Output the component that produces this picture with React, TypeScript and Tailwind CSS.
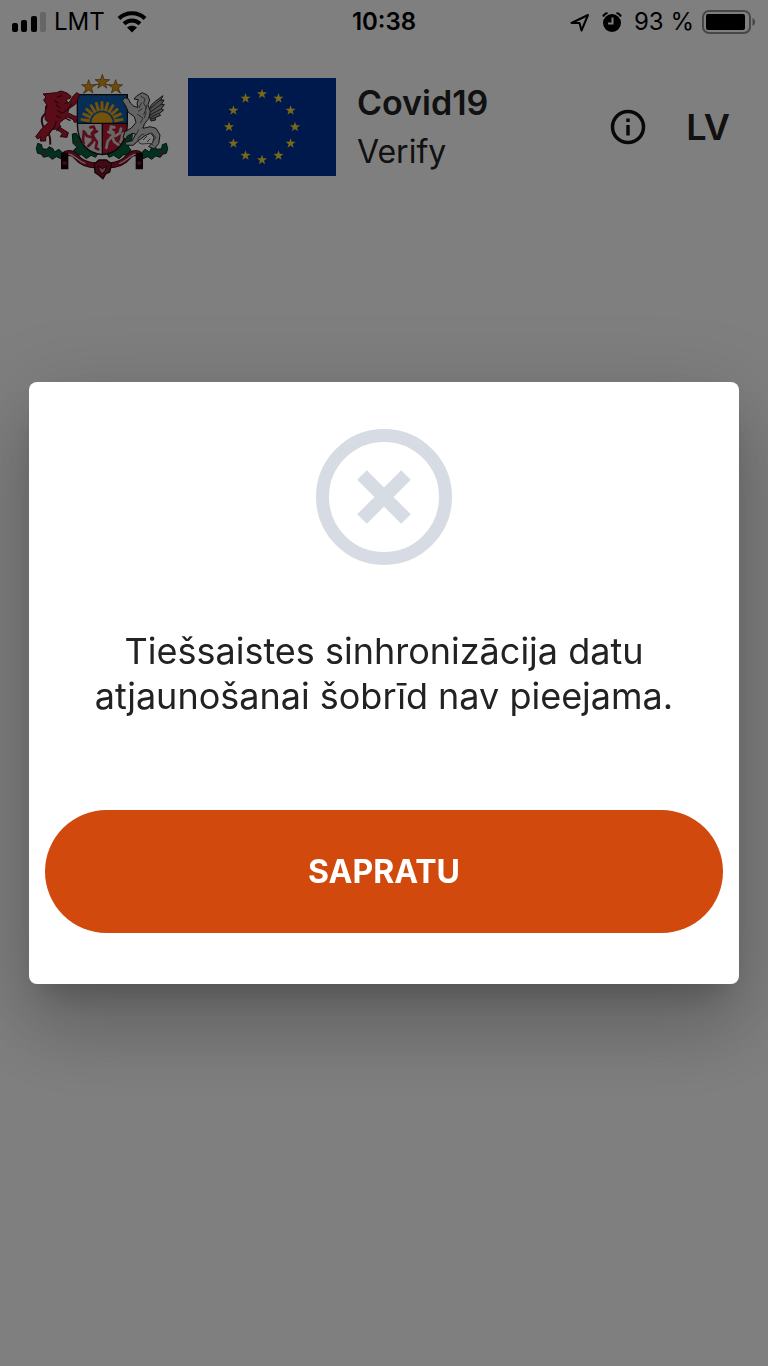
import { useState } from 'react';

function starPoints(cx: number, cy: number, r: number) {
  return Array.from({ length: 10 }, (_, i) => {
    const radius = i % 2 === 0 ? r : r * 0.4;
    const angle = (Math.PI / 5) * i - Math.PI / 2;
    return `${(cx + radius * Math.cos(angle)).toFixed(2)},${(cy + radius * Math.sin(angle)).toFixed(2)}`;
  }).join(' ');
}

function SignalIcon() {
  return (
    <svg className="h-5 w-[34px]" viewBox="0 0 34 20" aria-hidden="true">
      <rect x="0" y="11" width="6" height="9" rx="2" />
      <rect x="9" y="8" width="6" height="12" rx="2" />
      <rect x="19" y="4" width="6" height="16" rx="2" />
      <rect x="28" y="0" width="6" height="20" rx="2" opacity="0.2" />
    </svg>
  );
}

function WifiIcon() {
  return (
    <svg className="h-[22px] w-[30px]" viewBox="0 0 30 22" aria-hidden="true">
      <g fill="none" stroke="#000" strokeWidth="4">
        <path d="M2 7.500C9 .6 21 .6 28 7.500" />
        <path d="M7 12.700c4.500-4.400 11.500-4.400 16 0" />
      </g>
      <path d="M10 16.600c2.800-2.600 7.200-2.600 10 0l-5 5z" />
    </svg>
  );
}

function LocationIcon() {
  return (
    <svg className="h-5 w-5" viewBox="0 0 20 20" aria-hidden="true">
      <path
        d="M1.500 11L18 3l-6.500 15.500-2-7.500z"
        fill="none"
        stroke="#000"
        strokeWidth="2"
        strokeLinejoin="round"
      />
    </svg>
  );
}

function AlarmIcon() {
  return (
    <svg className="h-5 w-5" viewBox="0 0 20 20" aria-hidden="true">
      <circle cx="10" cy="11" r="9" />
      <path d="M1 4.500C2 2.500 3.500 1.300 5.500 1M19 4.500c-1-2-2.500-3.200-4.500-3.500" fill="none" stroke="#000" strokeWidth="2" />
      <path d="M10.500 5.500v6H6" fill="none" stroke="#fff" strokeWidth="2" />
    </svg>
  );
}

function BatteryIcon() {
  return (
    <svg className="h-6 w-[54px]" viewBox="0 0 54 24" aria-hidden="true">
      <rect x="1" y="1" width="47" height="22" rx="6" fill="none" stroke="#000" strokeOpacity="0.45" strokeWidth="2" />
      <rect x="4" y="4" width="39" height="16" rx="2" />
      <path d="M50.500 8c3.500 1.500 3.500 6.500 0 8z" opacity="0.45" />
    </svg>
  );
}

function StatusBar() {
  return (
    <div className="flex h-[43px] items-center px-3 text-2xl text-black">
      <div className="flex flex-1 items-center gap-2">
        <SignalIcon />
        <span>LMT</span>
        <span className="pl-1">
          <WifiIcon />
        </span>
      </div>
      <span className="font-semibold">10:38</span>
      <div className="flex flex-1 items-center justify-end gap-2">
        <LocationIcon />
        <span className="pl-1">
          <AlarmIcon />
        </span>
        <span className="pl-1 whitespace-nowrap">93 %</span>
        <BatteryIcon />
      </div>
    </div>
  );
}

const SUN_RAYS = [-80, -64, -48, -32, -16, 0, 16, 32, 48, 64, 80];

function CoatOfArms() {
  return (
    <svg className="h-[107px] w-[134px] shrink-0" viewBox="30 25 402 321" role="img" aria-label="Latvija">
      {/* oak branches */}
      <g fill="#06603f" stroke="#02291c" strokeWidth="3">
        <path d="M38 236l12 4 2 12 14 2 6-8 12 6 4 10 14-8 10 10 16-4 4 12-10 8-14 2-14-6-12 8-12-10-14 4-8-10-10-2-4-14z" />
        <path d="M424 236l-12 4-2 12-14 2-6-8-12 6-4 10-14-8-10 10-16-4-4 12 10 8 14 2 14-6 12 8 12-10 14 4 8-10 10-2 4-14z" />
        <path d="M142 208l12-2 8 14 10 12 14 16 22 4 12 12-8 14-14-6-14 10-14-12-16 2-8-16 10-8-12-12z" />
        <path d="M322 204l-12 4-8 12-8 14-18 14-20 4-12 12 8 14 14-6 16 10 14-12 14 2 8-16-8-10 10-14z" />
      </g>
      <g fill="#8b2032">
        <circle cx="56" cy="266" r="5" />
        <circle cx="408" cy="266" r="5" />
        <circle cx="160" cy="236" r="4" />
        <circle cx="304" cy="236" r="4" />
      </g>
      {/* ribbon */}
      <g fill="none" strokeLinecap="round">
        <path d="M124 266c22-4 26 8 42 22 18 14 38 14 66 14s48 0 66-14c16-14 20-26 42-22" stroke="#42050f" strokeWidth="18" />
        <path d="M124 266c22-4 26 8 42 22 18 14 38 14 66 14s48 0 66-14c16-14 20-26 42-22" stroke="#98152b" strokeWidth="12" />
        <path d="M130 268c18 2 26 20 50 28M334 268c-18 2-26 20-50 28" stroke="#d9c3c8" strokeWidth="4" />
      </g>
      <path d="M108 264h22v50h-22zM332 264h22v50h-22z" fill="#160306" />
      <path d="M113 290h12v10h-12zM337 290h12v10h-12z" fill="#7a1a2b" />
      <path d="M208 298l14-12h22l16 12-6 24-12 6-8 14-14-12-10-6z" fill="#86152a" stroke="#2e030a" strokeWidth="4" />
      <path d="M218 304l14 8 14-8-6 14-8 10-8-10z" fill="#b98290" stroke="#2e030a" strokeWidth="3" />
      {/* shield */}
      <path d="M157 90h150v86H157z" fill="#0f5cab" />
      <path d="M157 176h75v94c-45-4-75-36-75-94z" fill="#dcdcdc" />
      <path d="M232 176h75c0 58-30 90-75 94z" fill="#b81a32" />
      <g fill="#e6a417">
        <path d="M199 175a32 32 0 0 1 64 0z" />
        {SUN_RAYS.map((angle) => (
          <path key={angle} d="M226 138l1-28h8l1 28z" transform={`rotate(${angle} 231 175)`} />
        ))}
      </g>
      <path d="M157 90h150v86c0 58-30 90-75 94-45-4-75-36-75-94zM157 176h150M232 176v94" fill="none" stroke="#111" strokeWidth="4" />
      <g fill="none" strokeWidth="8" strokeLinecap="round" strokeLinejoin="round">
        <path d="M196 188l10-2 4 10-8 8 4 14-4 14-12 12M206 218l10 14-4 18 8 4M200 208l16-8M202 218l-16-4-6-10M176 236c-6-14 2-22 0-36" stroke="#b01e36" />
        <path d="M268 188l-10-2-2 10 10 8-4 14 6 14 12 8M260 216l-12 14-4 20M264 208l-14-6M270 214l14-8 4-14M286 232c8-10 2-18 8-26" stroke="#cfcfcf" />
      </g>
      {/* lion */}
      <path
        d="M76 240c-2-14 4-24-10-39-18-21-22-42-4-54"
        fill="none"
        stroke="#55101b"
        strokeWidth="6"
      />
      <path d="M62 124l8-4 10 8 5 14-8 8-8-3-8-10z" fill="#a61a2e" stroke="#4a0a15" strokeWidth="3" />
      <path
        d="M94 84l14-5 18 6 12 10-3 6-11 3 3 9-8 4 14-4 10-17 12-12 10 6-5 10-8 18-20 14-4 12 18 9 12 4-3 15-7 1-3-8-18-8-12 8-12 10 3 14 24 15-4 14-20-2 6-10-18-13-14 2-8 14-10 8 0 12-16 0 2-12-10 6-6-7 18-24 20-18-9-9-1-24 7-18-11-17 7-9-9-9z"
        fill="#b51a30"
        stroke="#4a0a15"
        strokeWidth="3"
      />
      <path
        d="M96 98l14-6M88 108l12 8M92 120l14 10M96 136l16 10M92 152l16 8M94 168l-4 16-18 22M108 184l-14 14M112 146l16-12 14-18M120 160l16 8"
        fill="none"
        stroke="#5c0b19"
        strokeWidth="4"
      />
      {/* griffin */}
      <path
        d="M414 93l-7 14 10-1-8 14 9 0-10 13 8 3-14 11 5 5-17 7 2 7-14 3-8-26 8-21 14-13z"
        fill="#a0a0a0"
        stroke="#222"
        strokeWidth="3"
      />
      <path d="M408 104l-32 28M410 118l-34 24M406 134l-32 18M400 146l-26 14M390 160l-14 4" stroke="#333" strokeWidth="3" />
      <path
        d="M336 93l16-9 16 8 6 14-5 14 7 21-5 21-14 17-2 12 20-5 18 5 12 20-4 26-14 15-16-6 12-12 4-16-10-13-17 8-20 15-16 14-24-1 2-8 20-5 10-20-10-2-15 8-4 9-9-4 5-17 20-12 14-16-5-18-18-13-7-18-11-17 7-9 11 3 6 13 11 10 12 3-3-12 4-11-13-2z"
        fill="#c9c9c9"
        stroke="#222"
        strokeWidth="3"
      />
      <path
        d="M346 94l14 8-4 14 8 14-8 20M336 148l18 12-8 16M364 140l-6 20M342 194l-10 18M358 208c-20 4-24 22-13 28s29-6 40 6M380 204l12 14-8 12M360 180l-9 11M350 114l-8 16M352 132l-12 8M366 120l-4 14M340 228l-14 12M366 214l-12 12M376 222l-10 10"
        fill="none"
        stroke="#555"
        strokeWidth="3"
      />
      {/* stars */}
      <path d="M174 86q56-58 114 0" fill="none" stroke="#625321" strokeWidth="3" />
      <g fill="#dc9618" stroke="#6b480c" strokeWidth="2">
        <polygon points={starPoints(191, 67, 22)} />
        <polygon points={starPoints(232, 52, 23)} />
        <polygon points={starPoints(272, 67, 22)} />
      </g>
    </svg>
  );
}

function EuFlag() {
  return (
    <svg className="h-[98px] w-[148px] shrink-0" viewBox="0 0 148 98" role="img" aria-label="EU">
      <rect width="148" height="98" fill="#003399" />
      {Array.from({ length: 12 }, (_, i) => {
        const angle = (Math.PI / 6) * i;
        return (
          <polygon
            key={i}
            points={starPoints(74 + 33 * Math.cos(angle), 49 + 33 * Math.sin(angle), 5.3)}
            fill="#f0d030"
          />
        );
      })}
    </svg>
  );
}

function Header() {
  return (
    <header className="flex items-center pt-[30px] pr-[38px] pl-[35px] text-[#222]">
      <CoatOfArms />
      <div className="ml-[19px]">
        <EuFlag />
      </div>
      <div className="ml-[21px] flex-1 leading-[49px]">
        <div className="text-[34px] font-semibold">Covid19</div>
        <div className="text-[32px]">Verify</div>
      </div>
      <button type="button" aria-label="Info" className="mr-10">
        <svg className="size-9" viewBox="0 0 36 36" aria-hidden="true">
          <circle cx="18" cy="18" r="15.500" fill="none" stroke="#111" strokeWidth="3.500" />
          <path d="M16.300 9.500h3.400v3.400h-3.400zM16.300 16h3.400v10.500h-3.400z" fill="#111" />
        </svg>
      </button>
      <button type="button" className="text-4xl font-semibold">
        LV
      </button>
    </header>
  );
}

interface AlertDialogProps {
  message: string;
  action: string;
  onClose: () => void;
}

function AlertDialog({ message, action, onClose }: AlertDialogProps) {
  return (
    <div className="fixed inset-0 flex items-center justify-center bg-black/50 px-[29px]">
      <div
        role="alertdialog"
        aria-modal="true"
        aria-describedby="alert-message"
        className="flex w-full flex-col items-center rounded-lg bg-white px-4 pt-[47px] pb-[51px] shadow-[0_22px_30px_-14px_rgba(0,0,0,0.2),0_48px_76px_6px_rgba(0,0,0,0.14),0_18px_92px_16px_rgba(0,0,0,0.12)]"
      >
        <svg className="size-[136px]" viewBox="0 0 136 136" fill="none" stroke="#d6dbe4" aria-hidden="true">
          <circle cx="68" cy="68" r="61.500" strokeWidth="13" />
          <path d="M46 46l44 44M90 46l-44 44" strokeWidth="13.500" />
        </svg>
        <p id="alert-message" className="mt-16 px-6 text-center text-4xl leading-[45px] text-[#222]">
          {message}
        </p>
        <button
          type="button"
          onClick={onClose}
          className="mt-[91px] h-[123px] w-full rounded-full bg-[#d1490c] text-[32px] font-bold text-white"
        >
          {action}
        </button>
      </div>
    </div>
  );
}

export default function App() {
  const [open, setOpen] = useState(true);

  return (
    <div className="min-h-screen bg-white font-[Inter,sans-serif]">
      <StatusBar />
      <Header />
      {open && (
        <AlertDialog
          message="Tiešsaistes sinhronizācija datu atjaunošanai šobrīd nav pieejama."
          action="SAPRATU"
          onClose={() => setOpen(false)}
        />
      )}
    </div>
  );
}
